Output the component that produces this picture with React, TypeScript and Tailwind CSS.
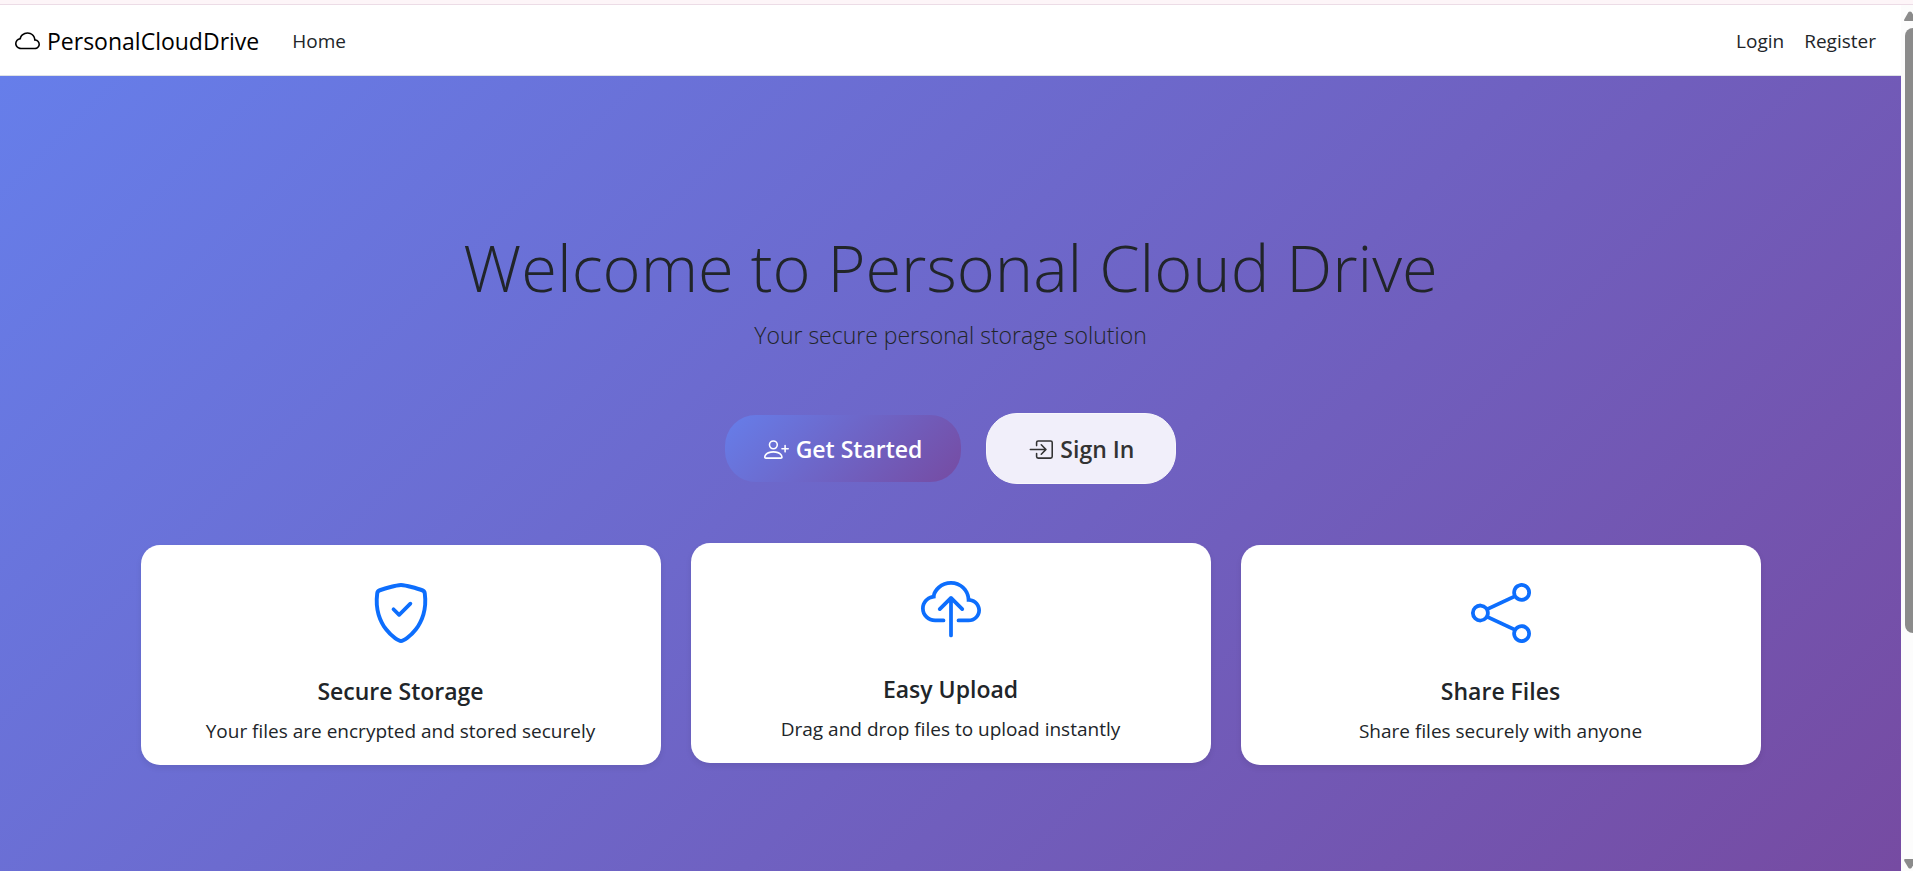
import React from "react";
import type { IconType } from "react-icons";
import {
  BsBoxArrowInRight,
  BsCloud,
  BsCloudUpload,
  BsPersonPlus,
  BsShare,
  BsShieldCheck,
} from "react-icons/bs";

interface Feature {
  title: string;
  text: string;
  Icon: IconType;
  raised?: boolean;
}

const features: Feature[] = [
  { title: "Secure Storage", text: "Your files are encrypted and stored securely", Icon: BsShieldCheck },
  { title: "Easy Upload", text: "Drag and drop files to upload instantly", Icon: BsCloudUpload, raised: true },
  { title: "Share Files", text: "Share files securely with anyone", Icon: BsShare },
];

function Navbar() {
  return (
    <nav className="flex h-[71px] shrink-0 items-center border-b border-[#dee2e6] bg-white px-[15px] pt-0.5 text-[19px] text-[#212529]">
      <a href="#" className="flex items-center gap-[7px] text-[23px] text-black">
        <BsCloud className="size-[25px]" />
        PersonalCloudDrive
      </a>
      <a href="#home" className="ml-[33px]">Home</a>
      <div className="ml-auto flex gap-5 pr-2.5">
        <a href="#login">Login</a>
        <a href="#register">Register</a>
      </div>
    </nav>
  );
}

function FeatureCard({ title, text, Icon, raised }: Feature) {
  return (
    <article
      className={`flex flex-col items-center rounded-[19px] bg-white px-5 pt-[38px] pb-[19px] text-[#212529] shadow-[0_3px_6px_rgba(0,0,0,0.08)] ${
        raised ? "-mt-0.5 mb-0.5" : ""
      }`}
    >
      <Icon className="size-[60px] text-[#0d6efd]" />
      <h5 className="mt-[33px] text-[23px] leading-[30px] font-semibold">{title}</h5>
      <p className="mt-2.5 text-[19px] leading-[30px]">{text}</p>
    </article>
  );
}

function Scrollbar() {
  return (
    <div aria-hidden="true" className="flex w-3 shrink-0 flex-col items-end overflow-hidden bg-[#fcfcfc]">
      <svg viewBox="0 0 9 10" className="mt-1.5 h-[10px] w-[9px] shrink-0" fill="#8b8b8b">
        <path d="M0 9.5 Q0 8.5 .5 8 L4.5 1 Q6 -.2 7.5 1 L9 3.5 V10 H.5Z" />
      </svg>
      <div className="mt-[7px] w-2 grow-[605] rounded-l-lg bg-[#8b8b8b]" />
      <div className="grow-[226]" />
      <svg viewBox="0 0 9 10" className="mb-0.5 h-[10px] w-[9px] shrink-0" fill="#8b8b8b">
        <path d="M.5 0 H9 V6.5 L7.5 9 Q6 10.2 4.5 9 L.3 2 Q0 1 .5 0Z" />
      </svg>
    </div>
  );
}

export default function App() {
  return (
    <div className="flex h-screen flex-col overflow-hidden font-['Open_Sans','Noto_Sans',sans-serif]">
      <div className="h-[5px] shrink-0 border-b border-[#ecdce6] bg-[#fdf5f8]" />
      <div className="flex min-h-0 flex-1">
        <div className="flex min-w-0 flex-1 flex-col">
          <Navbar />
          <main className="flex-1 bg-[linear-gradient(135deg,#667eea_0%,#764ba2_100%)] px-5 text-center">
            <div className="mx-auto max-w-[1620px] pt-[149px]">
              <h1 className="text-[65px] leading-[84px] font-light text-[#212529]">
                Welcome to Personal Cloud Drive
              </h1>
              <p className="mt-[7px] text-[23px] leading-[38px] font-light text-[#212529]">
                Your secure personal storage solution
              </p>
              <div className="mt-[59px] flex items-center justify-center gap-[25px] text-[23px] font-semibold">
                <a
                  href="#register"
                  className="flex h-[67px] items-center gap-[7px] rounded-[31px] bg-[linear-gradient(135deg,#667eea_0%,#764ba2_100%)] px-[39px] pt-0.5 text-white"
                >
                  <BsPersonPlus className="size-[25px]" />
                  Get Started
                </a>
                <a
                  href="#login"
                  className="flex h-[71px] items-center gap-[7px] rounded-[31px] border border-[#f8f7fc] bg-[#f1effa] px-[41px] pt-0.5 text-[#333333]"
                >
                  <BsBoxArrowInRight className="size-[25px]" />
                  Sign In
                </a>
              </div>
              <div className="mt-[61px] grid grid-cols-3 gap-[30px]">
                {features.map((feature) => (
                  <FeatureCard key={feature.title} {...feature} />
                ))}
              </div>
            </div>
          </main>
        </div>
        <Scrollbar />
      </div>
    </div>
  );
}
